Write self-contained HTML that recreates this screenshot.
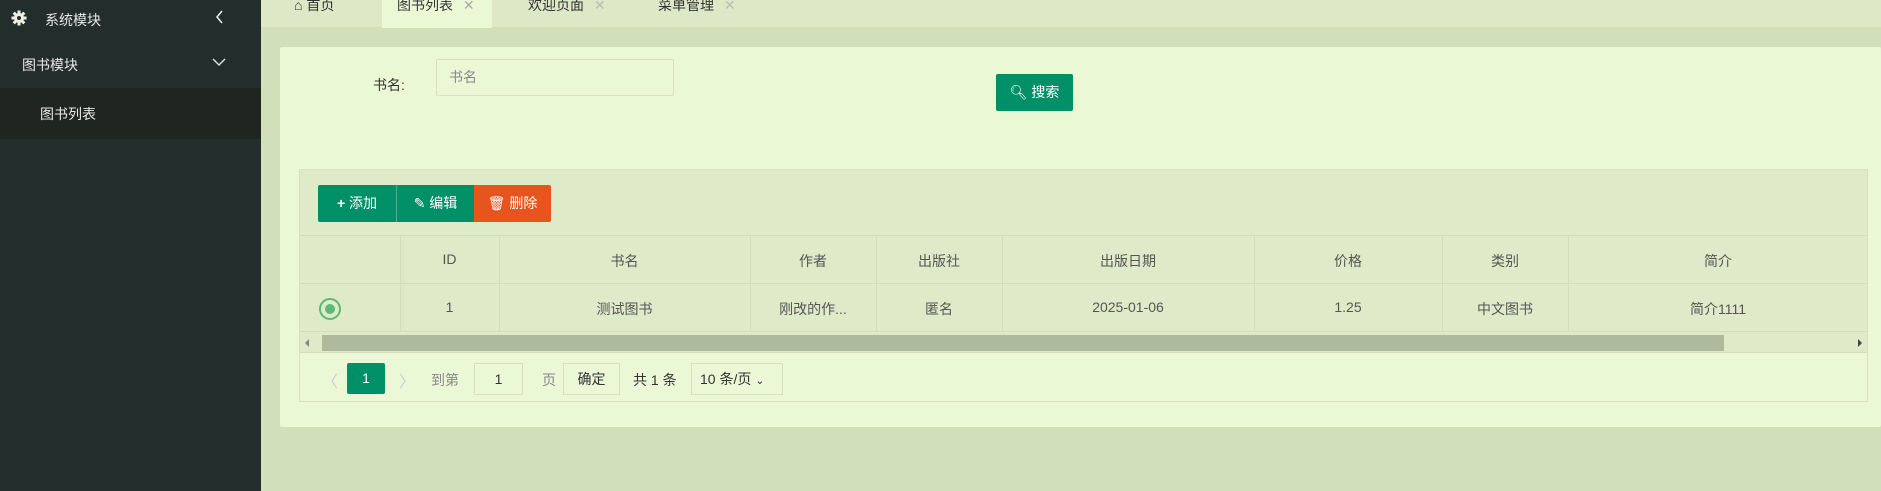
<!DOCTYPE html>
<html><head><meta charset="utf-8"><style>
*{box-sizing:border-box;margin:0;padding:0}
body{width:1881px;height:491px;overflow:hidden;background:#d2dfbb;font-family:"Liberation Sans","Noto Sans CJK SC",sans-serif;font-size:14px;position:relative;color:#333}
.abs{position:absolute}
.side{left:0;top:0;width:261px;height:491px;background:#222d2c;color:#e8e8e8}
.tabs{left:261px;top:0;width:1620px;height:27px;background:#dde8c6}
.card{left:280px;top:47px;width:1601px;height:380px;background:#ebf8d6;border-radius:2px}
.tbl{left:299px;top:169px;width:1569px;height:233px;border:1px solid #d6e2c0;background:#ebf8d6}
.btn{height:37px;line-height:37px;color:#fff;text-align:center;font-size:14px}
.cell{position:absolute;text-align:center;color:#555}
.vl{position:absolute;width:1px;background:#d2deb9}
</style></head><body>
<div class="abs side">
  <svg class="abs" style="left:11px;top:10px" width="16" height="16" viewBox="0 0 16 16"><g fill="#f0f0e0"><circle cx="8" cy="8" r="5"/><rect x="6.5" y="0.5" width="3" height="15"/><rect x="0.5" y="6.5" width="15" height="3"/><rect x="6.5" y="0.5" width="3" height="15" transform="rotate(45 8 8)"/><rect x="6.5" y="0.5" width="3" height="15" transform="rotate(-45 8 8)"/></g><circle cx="8" cy="8" r="2" fill="#222d2c"/></svg>
  <div class="abs" style="left:45px;top:10px;font-size:14px">系统模块</div>
  <svg class="abs" style="left:215px;top:10px" width="9" height="14"><path d="M7 1L2 7L7 13" stroke="#e8e8e8" fill="none" stroke-width="1.6"/></svg>
  <div class="abs" style="left:22px;top:55px">图书模块</div>
  <svg class="abs" style="left:212px;top:58px" width="14" height="9"><path d="M1 1L7 7L13 1" stroke="#ddd" fill="none" stroke-width="1.5"/></svg>
  <div class="abs" style="left:0;top:88px;width:261px;height:51px;background:#1f2520"></div>
  <div class="abs" style="left:40px;top:104px">图书列表</div>
</div>
<div class="abs tabs">
  <div class="abs" style="left:121px;top:0;width:110px;height:28px;background:#ebf8d6"></div>
  <div class="abs" style="left:33px;top:-5px;color:#333">⌂ 首页</div>
  <div class="abs" style="left:136px;top:-5px;color:#333">图书列表 <span style="color:#aaa;margin-left:6px">✕</span></div>
  <div class="abs" style="left:267px;top:-5px;color:#333">欢迎页面 <span style="color:#bbb;margin-left:6px">✕</span></div>
  <div class="abs" style="left:397px;top:-5px;color:#333">菜单管理 <span style="color:#bbb;margin-left:6px">✕</span></div>
</div>
<div class="abs card"></div>
<div class="abs" style="left:373px;top:75px;color:#333">书名:</div>
<div class="abs" style="left:436px;top:59px;width:238px;height:37px;border:1px solid #d6e0c4;border-radius:2px;padding-left:12px;line-height:35px;color:#888">书名</div>
<div class="abs btn" style="left:996px;top:74px;width:77px;background:#009068;border-radius:2px">🔍︎ 搜索</div>
<div class="abs tbl">
  <div class="abs" style="left:0;top:0;width:1567px;height:65px;background:#dfeac8"></div>
  <div class="abs btn" style="left:18px;top:15px;width:78px;background:#009068;border-radius:2px 0 0 2px"><b>+</b> 添加</div>
  <div class="abs btn" style="left:96px;top:15px;width:78px;background:#009068;border-left:1px solid #4fb08f">✎ 编辑</div>
  <div class="abs btn" style="left:174px;top:15px;width:77px;background:#e8541e;border-radius:0 2px 2px 0">🗑︎ 删除</div>
  <div class="abs" style="left:0;top:65px;width:1567px;height:97px;background:#dfeac8;border-top:1px solid #d2deb9"></div>
  <div class="abs" style="left:0;top:113px;width:1567px;height:1px;background:#d2deb9"></div>
  <div class="abs" style="left:0;top:161px;width:1567px;height:1px;background:#d2deb9"></div>
  <div class="vl" style="left:100px;top:65px;height:96px;box-shadow:2px 0 3px rgba(0,0,0,.06)"></div>
  <div class="vl" style="left:199px;top:65px;height:96px"></div>
  <div class="vl" style="left:450px;top:65px;height:96px"></div>
  <div class="vl" style="left:576px;top:65px;height:96px"></div>
  <div class="vl" style="left:702px;top:65px;height:96px"></div>
  <div class="vl" style="left:954px;top:65px;height:96px"></div>
  <div class="vl" style="left:1142px;top:65px;height:96px"></div>
  <div class="vl" style="left:1268px;top:65px;height:96px"></div>
  <div class="cell" style="left:100px;width:99px;top:81px">ID</div>
  <div class="cell" style="left:199px;width:251px;top:81px">书名</div>
  <div class="cell" style="left:450px;width:126px;top:81px">作者</div>
  <div class="cell" style="left:576px;width:126px;top:81px">出版社</div>
  <div class="cell" style="left:702px;width:252px;top:81px">出版日期</div>
  <div class="cell" style="left:954px;width:188px;top:81px">价格</div>
  <div class="cell" style="left:1142px;width:126px;top:81px">类别</div>
  <div class="cell" style="left:1268px;width:300px;top:81px">简介</div>
  <div class="abs" style="left:19px;top:128px;width:22px;height:22px;border:2px solid #5fb878;border-radius:50%"><div style="margin:4px;width:10px;height:10px;border-radius:50%;background:#5fb878"></div></div>
  <div class="cell" style="left:100px;width:99px;top:129px">1</div>
  <div class="cell" style="left:199px;width:251px;top:129px">测试图书</div>
  <div class="cell" style="left:450px;width:126px;top:129px">刚改的作...</div>
  <div class="cell" style="left:576px;width:126px;top:129px">匿名</div>
  <div class="cell" style="left:702px;width:252px;top:129px">2025-01-06</div>
  <div class="cell" style="left:954px;width:188px;top:129px">1.25</div>
  <div class="cell" style="left:1142px;width:126px;top:129px">中文图书</div>
  <div class="cell" style="left:1268px;width:300px;top:129px">简介1111</div>
  <div class="abs" style="left:0;top:162px;width:1567px;height:21px;background:#dfeac8;border-bottom:1px solid #d2deb9"></div>
  <div class="abs" style="left:5px;top:169px;width:0;height:0;border:4px solid transparent;border-right-color:#888;border-left:0"></div>
  <div class="abs" style="left:22px;top:165px;width:1402px;height:16px;background:#aeba9c"></div>
  <div class="abs" style="left:1558px;top:169px;width:0;height:0;border:4px solid transparent;border-left-color:#444;border-right:0"></div>
  <div class="abs" style="left:22px;top:198px;color:#ccc;font-size:16px">〈</div>
  <div class="abs" style="left:47px;top:193px;width:38px;height:31px;background:#009068;color:#fff;text-align:center;line-height:31px;border-radius:2px">1</div>
  <div class="abs" style="left:99px;top:198px;color:#ccc;font-size:16px">〉</div>
  <div class="abs" style="left:131px;top:200px;color:#888">到第</div>
  <div class="abs" style="left:174px;top:193px;width:49px;height:32px;border:1px solid #d6e0c4;text-align:center;line-height:30px;color:#333">1</div>
  <div class="abs" style="left:242px;top:200px;color:#888">页</div>
  <div class="abs" style="left:263px;top:193px;width:57px;height:32px;border:1px solid #d6e0c4;text-align:center;line-height:30px;color:#333">确定</div>
  <div class="abs" style="left:333px;top:200px;color:#333">共 1 条</div>
  <div class="abs" style="left:391px;top:193px;width:92px;height:32px;border:1px solid #d6e0c4;line-height:30px;padding-left:8px;color:#333">10 条/页 <span style="font-size:11px">⌄</span></div>
</div>
</body></html>
